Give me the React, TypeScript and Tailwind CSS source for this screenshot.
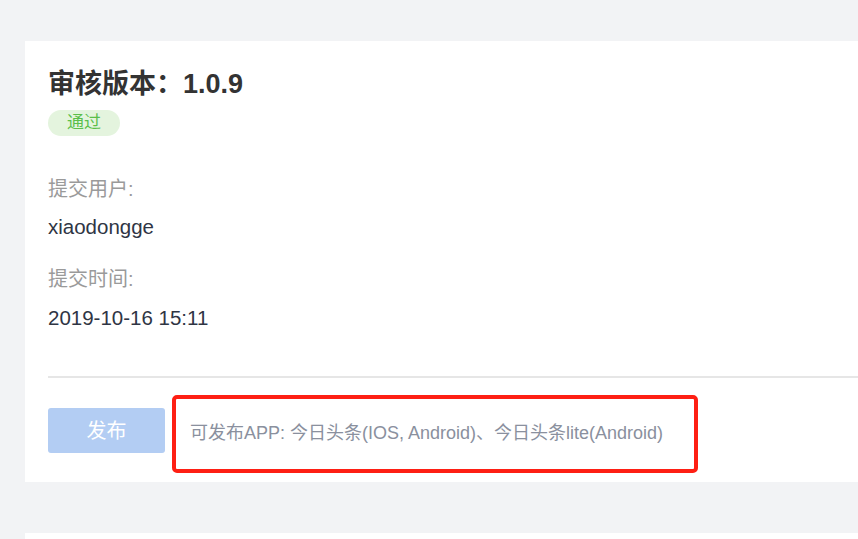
export default function App() {
  return (
    <div
      className="h-[539px] overflow-hidden bg-[#f2f3f5] pl-[25px] pt-[41px]"
      style={{ fontFamily: '"Liberation Sans", "Noto Sans CJK SC", sans-serif' }}
    >
      <div className="w-[860px] bg-white pb-[9px] pl-[23px] pt-[28px]">
        <h1 className="text-[27px] font-bold leading-[30px] text-[#333333]">
          审核版本：1.0.9
        </h1>
        <div className="mt-[11px] flex h-[26px] w-[72px] items-center justify-center rounded-full bg-[#e4f4de] text-[17px] text-[#5bbf4a]">
          通过
        </div>

        <div className="mt-[39px] text-[20px] leading-[28px] text-[#9a9a9a]">提交用户:</div>
        <div className="mt-[10px] text-[20.5px] leading-[28px] text-[#2f3544]">xiaodongge</div>
        <div className="mt-[24px] text-[20px] leading-[28px] text-[#9a9a9a]">提交时间:</div>
        <div className="mt-[11px] text-[20.5px] leading-[28px] text-[#2f3544]">2019-10-16 15:11</div>

        <div className="mt-[44px] h-[2px] bg-[#e6e6e6]" />

        <div className="mt-[17px] flex items-start">
          <button className="mt-[13px] h-[45px] w-[117px] rounded-[3px] bg-[#b3cdf3] text-[20px] text-white">
            发布
          </button>
          <div className="ml-[7px] flex h-[78px] w-[526px] items-center rounded-[5px] border-[4px] border-[#fe1f14] pb-[2px] pl-[14px] text-[18px] text-[#8a909e]">
            可发布APP: 今日头条(IOS, Android)、今日头条lite(Android)
          </div>
        </div>
      </div>

      <div className="mt-[51px] h-[60px] w-[860px] bg-white" />
    </div>
  );
}
